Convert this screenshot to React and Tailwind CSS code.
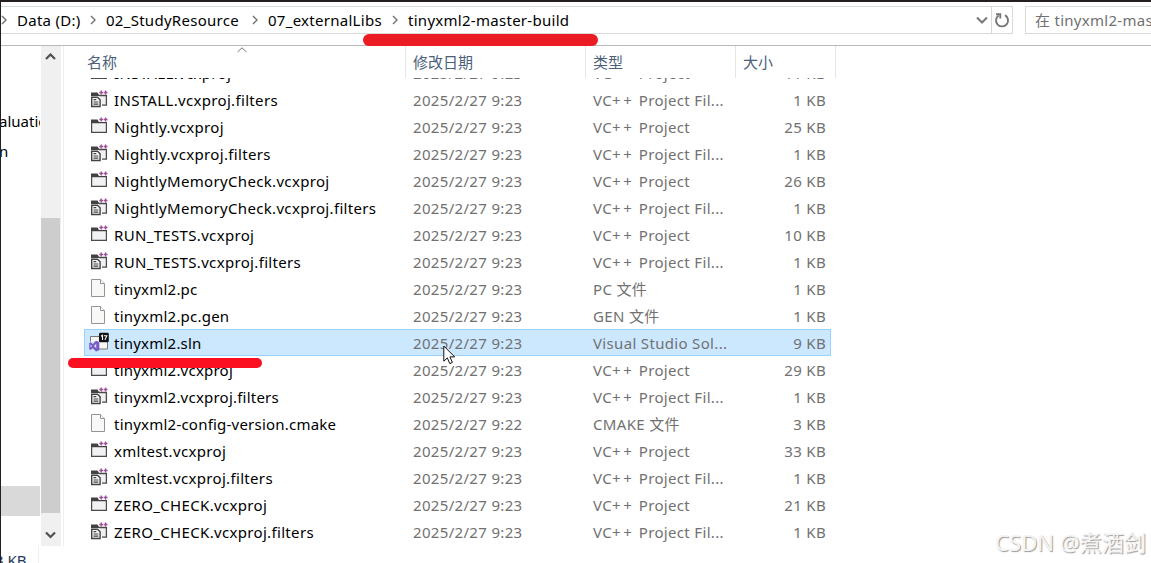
import clsx from 'clsx'

const files = [
  { name: 'INSTALL.vcxproj', kind: 'project', size: '11 KB' },
  { name: 'INSTALL.vcxproj.filters', kind: 'filters', size: '1 KB' },
  { name: 'Nightly.vcxproj', kind: 'project', size: '25 KB' },
  { name: 'Nightly.vcxproj.filters', kind: 'filters', size: '1 KB' },
  { name: 'NightlyMemoryCheck.vcxproj', kind: 'project', size: '26 KB' },
  { name: 'NightlyMemoryCheck.vcxproj.filters', kind: 'filters', size: '1 KB' },
  { name: 'RUN_TESTS.vcxproj', kind: 'project', size: '10 KB' },
  { name: 'RUN_TESTS.vcxproj.filters', kind: 'filters', size: '1 KB' },
  { name: 'tinyxml2.pc', kind: 'file', type: 'PC 文件', size: '1 KB' },
  { name: 'tinyxml2.pc.gen', kind: 'file', type: 'GEN 文件', size: '1 KB' },
  { name: 'tinyxml2.sln', kind: 'solution', size: '9 KB', selected: true },
  { name: 'tinyxml2.vcxproj', kind: 'project', size: '29 KB' },
  { name: 'tinyxml2.vcxproj.filters', kind: 'filters', size: '1 KB' },
  { name: 'tinyxml2-config-version.cmake', kind: 'file', type: 'CMAKE 文件', date: '2025/2/27 9:22', size: '3 KB' },
  { name: 'xmltest.vcxproj', kind: 'project', size: '33 KB' },
  { name: 'xmltest.vcxproj.filters', kind: 'filters', size: '1 KB' },
  { name: 'ZERO_CHECK.vcxproj', kind: 'project', size: '21 KB' },
  { name: 'ZERO_CHECK.vcxproj.filters', kind: 'filters', size: '1 KB' },
]

const typeNames = {
  project: <>VC<span className="tracking-[2.7px]">++</span> Project</>,
  filters: <>VC<span className="tracking-[2.7px]">++</span> Project Fil...</>,
  solution: 'Visual Studio Sol...',
}

const crumbs = [
  { label: 'Data (D:)', width: 'w-[89px]' },
  { label: '02_StudyResource', width: 'w-[162px]' },
  { label: '07_externalLibs', width: 'w-[140px]' },
  { label: 'tinyxml2-master-build', width: 'w-[170px]' },
]

function Chevron({ className, d = 'M1 1l4 4-4 4', w = 6, h = 10, stroke = '#777', sw = 1.5 }) {
  return (
    <svg className={clsx('shrink-0', className)} width={w} height={h} viewBox={`0 0 ${w} ${h}`} fill="none" stroke={stroke} strokeWidth={sw}>
      <path d={d} />
    </svg>
  )
}

function PlusPlus() {
  return <path d="M9.300 2.500h3.800M11.200.5v4M13.700 2.500h3.800M15.600.5v4" stroke="#9b4f96" strokeWidth="1.4" />
}

function FileIcon({ kind }) {
  if (kind === 'project') {
    return (
      <svg className="-mt-px" width="19" height="19" viewBox="0 0 19 19" fill="none">
        <path d="M1.600 5.600h14.800v9.800H1.600z" fill="#f1f1f4" stroke="#4b4b4b" strokeWidth="1.2" />
        <path d="M1 2.500h6.500l1.500 2.500h8v1.100H1z" fill="#424242" />
        <PlusPlus />
      </svg>
    )
  }
  if (kind === 'filters') {
    return (
      <svg width="19" height="19" viewBox="0 0 19 19" fill="none">
        <path d="M9 5.5h7.4v9.700H12" fill="#f1f1f4" stroke="#4b4b4b" strokeWidth="1.3" />
        <path d="M1 2.5h6.5L9 4.7v1.3H1z" fill="#424242" />
        <path d="M1.700 7.200h5.800l2.600 2.600v6.700H1.700z" fill="#f6f6f6" stroke="#424242" strokeWidth="1.4" />
        <path d="M3.500 9.700h2.800M3.500 12h4.800M3.500 14.200h4.800" stroke="#424242" strokeWidth="1.2" />
        <PlusPlus />
      </svg>
    )
  }
  if (kind === 'solution') {
    return (
      <svg className="overflow-visible" width="19" height="19" viewBox="0 0 19 19" fill="none">
        <path d="M.5 3.500h17v12.500H.5z" fill="#f7f7f8" stroke="#777" />
        <path d="M-2 8.500h8.500v10H-2z" fill="#cce8ff" />
        <path d="M6 7.800l3.300 1.200v8.300L6 18.500 2.800 15.200.5 16.900l-1.300-.7V10l1.300-.7 2.300 1.800zM6.200 10.800L4 13l2.200 2.200zM.5 11.600v2.900L2 13z" fill="#7b5cc4" fillRule="evenodd" />
        <rect x="9" y="-.3" width="9.800" height="9.600" rx="1.400" fill="#111" />
        <path d="M11 3.200l1.500-.9v4.600M13.900 2.700h2.900L15 6.900" stroke="#fff" strokeWidth="1.100" />
      </svg>
    )
  }
  return (
    <svg width="19" height="19" viewBox="0 0 19 19" fill="none">
      <path d="M1.500.5h9l4 4v13h-13z" fill="#f8f8f7" stroke="#949494" />
      <path d="M10.500.5v4h4" stroke="#949494" fill="#fff" />
    </svg>
  )
}

function FileRow({ file }) {
  return (
    <div
      className={clsx(
        'flex h-[27px] w-[747px] shrink-0 items-center border tracking-[0.33px] text-[#717171]',
        file.selected ? 'border-[#99d1ff] bg-[#cce8ff]' : 'border-transparent',
      )}
    >
      <div className="flex w-[328px] items-center pl-[5px]">
        <FileIcon kind={file.kind} />
        <span className={clsx('pl-[5px] text-black', file.name.startsWith('tinyxml2') && 'tracking-[0.22px]')}>{file.name}</span>
      </div>
      <div className="w-[180px]">{file.date || '2025/2/27 9:23'}</div>
      <div className="w-[150px]">{file.type || typeNames[file.kind]}</div>
      <div className="flex-1 pr-[4px] text-right">{file.size}</div>
    </div>
  )
}

function AddressBar() {
  return (
    <div className="flex h-[40px] shrink-0 border-b border-[#b9b9b9] tracking-[0.28px]">
      <div className="flex h-[28px] w-[1012px] items-center border-y border-r border-[#d9d9d9]">
        <div className="flex flex-1 items-center">
          <Chevron className="mr-[10px]" />
          {crumbs.map((crumb, i) => (
            <div key={crumb.label} className={clsx('flex items-center', crumb.width)}>
              <span className="flex-1 text-black">{crumb.label}</span>
              {i < crumbs.length - 1 && <Chevron className="mr-[10px]" />}
            </div>
          ))}
        </div>
        <Chevron className="mr-[3px]" d="M1 1.5l5 5 5-5" w={12} h={8} sw={2} />
        <div className="flex h-full w-[21px] items-center justify-center border-l border-[#d9d9d9]">
          <svg width="16" height="16" viewBox="0 0 16 16" fill="none" stroke="#777" strokeWidth="1.9">
            <path d="M11 3.200A6 6 0 1 1 4.600 3.500" />
            <path d="M2 2.200h4.300v4.300" />
          </svg>
        </div>
      </div>
      <div className="ml-[12px] flex h-[28px] flex-1 items-center overflow-hidden border-y border-l border-[#d9d9d9] pl-[9px] whitespace-nowrap text-[#717171]">
        在 tinyxml2-master-build
      </div>
    </div>
  )
}

function NavPane() {
  return (
    <div className="flex w-[40px] shrink-0 flex-col overflow-hidden text-black">
      <div className="mt-[61px] h-[30px] w-[39px] shrink-0 overflow-hidden leading-[28px] whitespace-nowrap">
        <span className="-ml-[2px]">aluation</span>
      </div>
      <div className="h-[30px] shrink-0 leading-[28px]"><span className="-ml-[2px]">n</span></div>
      <div className="mt-[319px] h-[30px] w-[39px] shrink-0 bg-[#d9d9d9]" />
      <div className="mt-[29px] h-[20px] w-[38px] shrink-0 border-r border-[#f0f0f0] leading-[30px] whitespace-nowrap text-[#1e3a5f]">
        <span className="-ml-[6px]">3 KB</span>
      </div>
    </div>
  )
}

function ScrollBar() {
  return (
    <div className="flex h-[500px] w-[20px] shrink-0 flex-col bg-[#f0f0f0]">
      <div className="flex h-[172px] w-[19px] justify-center pt-[7px]">
        <Chevron d="M1 6l4.500-4.500L10 6" w={11} h={8} stroke="#505050" sw={2.2} />
      </div>
      <div className="h-[295px] w-[19px] bg-[#cdcdcd]" />
      <div className="flex w-[19px] justify-center pt-[18px]">
        <Chevron d="M1 1.5L5.500 6 10 1.500" w={11} h={8} stroke="#505050" sw={2.2} />
      </div>
    </div>
  )
}

function FileList() {
  return (
    <div className="ml-[2px] flex h-[500px] flex-1 flex-col border-l border-[#f0f0f0]">
      <div className="flex h-[32px] shrink-0 pl-[22px] leading-[33px] text-[#4c607a]">
        <div className="flex w-[320px] border-r border-[#e5e5e5]">
          <span className="w-[151px] pl-px">名称</span>
          <Chevron className="mt-[1px]" d="M.5 5L5 .8 9.500 5" w={10} h={6} sw={1} />
        </div>
        <div className="w-[180px] border-r border-[#e5e5e5] pl-[7px]">修改日期</div>
        <div className="w-[150px] border-r border-[#e5e5e5] pl-[7px]">类型</div>
        <div className="w-[100px] border-r border-[#e5e5e5] pl-[7px]">大小</div>
      </div>
      <div className="flex flex-1 flex-col overflow-hidden pl-[20px]">
        <div className="-mt-[19px] flex flex-col">
          {files.map(file => <FileRow key={file.name} file={file} />)}
        </div>
      </div>
    </div>
  )
}

export default function App() {
  return (
    <div className="relative flex h-[563px] w-[1151px] flex-col overflow-hidden border-t-2 border-l border-[#231f20] bg-white pt-[4px] font-['Noto_Sans','Noto_Sans_CJK_SC',sans-serif] text-[15px] leading-[20px]">
      <AddressBar />
      <div className="flex h-[517px] shrink-0">
        <NavPane />
        <ScrollBar />
        <FileList />
      </div>

      <div className="absolute top-[32px] left-[362px] h-[12px] w-[235px] rounded-full bg-[#ec1c24]" />
      <div className="absolute top-[356px] left-[67px] h-[10px] w-[194px] rounded-full bg-[#fa1020]" />

      <svg className="absolute top-[343px] left-[442px]" width="13" height="20" viewBox="0 0 13 20">
        <path d="M.8 1v15.200l3.500-3.300 2.500 5.700 2.600-1.200-2.500-5.500h4.800z" fill="#fff" stroke="#111" strokeWidth="1" />
      </svg>

      <div className="absolute top-[525px] left-[994px] text-[22px] leading-[30px] whitespace-nowrap tracking-[0.1px] text-[#f4f4f4] [text-shadow:1px_1px_1px_#999]">
        CSDN @煮酒剑
      </div>
    </div>
  )
}
